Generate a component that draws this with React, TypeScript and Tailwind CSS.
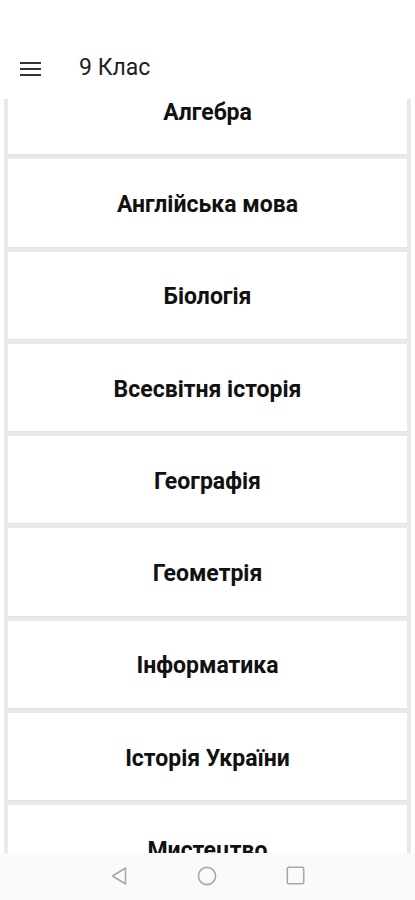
const subjects = [
  "Алгебра",
  "Англійська мова",
  "Біологія",
  "Всесвітня історія",
  "Географія",
  "Геометрія",
  "Інформатика",
  "Історія України",
  "Мистецтво",
];

const App = () => {
  return (
    <div className="h-[900px] w-full flex flex-col bg-white overflow-hidden font-['Roboto',sans-serif]">
      <header className="h-[99px] shrink-0 flex items-end pb-[17px] bg-white relative z-10">
        <button className="ml-[20px] w-[21px] flex flex-col gap-[4px] mb-[6px]">
          <span className="h-[2px] w-full bg-[#333]" />
          <span className="h-[2px] w-full bg-[#333]" />
          <span className="h-[2px] w-full bg-[#333]" />
        </button>
        <h1 className="ml-[38px] text-[23px] leading-[28px] text-[#1e1e1e]">9 Клас</h1>
      </header>

      <main className="flex-1 overflow-hidden">
        <div className="-mt-[32px] mx-[4px] bg-[#e9e9e9] px-[4px] flex flex-col gap-[4px]">
          {subjects.map((s) => (
            <div
              key={s}
              className="h-[88.3px] shrink-0 bg-white flex items-center justify-center border-b border-[#e2e2e2]"
            >
              <span className="text-[23px] leading-[28px] font-bold text-[#111] translate-y-[2px]">{s}</span>
            </div>
          ))}
        </div>
      </main>

      <nav className="h-[47px] shrink-0 bg-[#fafafa] flex items-center justify-center gap-[69px] pb-[2px]">
        <svg width="18" height="20" viewBox="0 0 18 20">
          <path d="M15.5 2 L2.5 10 L15.5 18 Z" fill="none" stroke="#a8a8a8" strokeWidth="1.6" strokeLinejoin="round" />
        </svg>
        <svg width="20" height="20" viewBox="0 0 20 20">
          <circle cx="10" cy="10" r="8.6" fill="none" stroke="#a8a8a8" strokeWidth="1.6" />
        </svg>
        <svg width="19" height="19" viewBox="0 0 19 19">
          <rect x="1.3" y="1.3" width="16.4" height="16.4" rx="1.5" fill="none" stroke="#a8a8a8" strokeWidth="1.6" />
        </svg>
      </nav>
    </div>
  );
};

export default App;
